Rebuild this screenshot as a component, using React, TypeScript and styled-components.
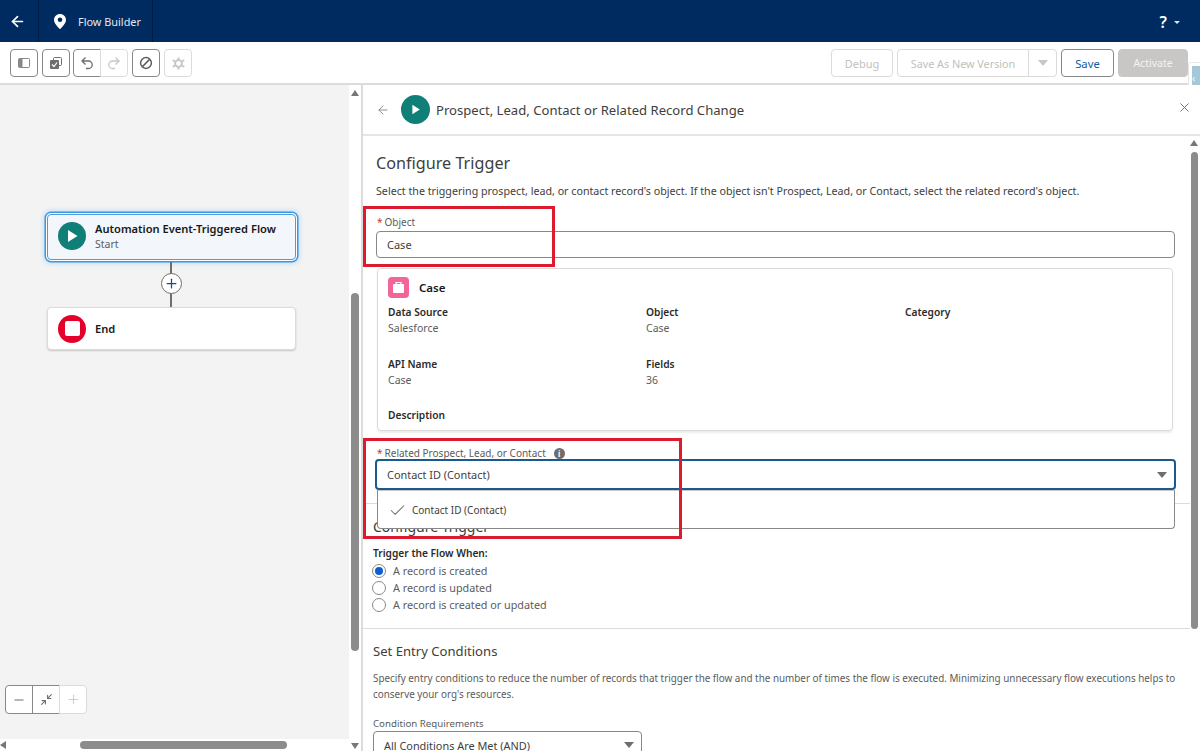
import React from 'react';
import styled, { createGlobalStyle } from 'styled-components';
import { ArrowLeft, Check, Minimize2, Minus, Plus, X } from 'lucide-react';

const GlobalStyle = createGlobalStyle`
  html, body {
    margin: 0;
    padding: 0;
    width: 1200px;
    height: 751px;
    overflow: hidden;
    background: #fff;
    font-family: "Noto Sans", "Open Sans", Arial, sans-serif;
    color: #3e3e3c;
  }
  * { box-sizing: border-box; }
`;

const Page = styled.div`
  position: relative;
  width: 1200px;
  height: 751px;
  overflow: hidden;
  display: flex;
  flex-direction: column;
`;

const Header = styled.header`
  height: 42px;
  flex: none;
  background: #002b60;
  display: flex;
  align-items: stretch;
  color: #fff;
`;

const BackTab = styled.div`
  width: 39px;
  border-right: 1px solid #001c42;
  display: flex;
  align-items: center;
  justify-content: center;
  padding-right: 4px;
`;

const TitleTab = styled.div`
  width: 114px;
  border-right: 1px solid #001c42;
  display: flex;
  align-items: center;
  gap: 12px;
  padding-left: 15px;
  font-size: 10.9px;
  color: #e4e9f0;
`;

const HelpMenu = styled.div`
  margin-left: auto;
  padding: 2px 20px 0 0;
  display: flex;
  align-items: center;
  gap: 7px;
  font-size: 16px;
  font-weight: 600;
`;

const Caret = styled.span<{ $w?: number; $color?: string }>`
  width: 0;
  height: 0;
  border-left: ${(p) => p.$w || 5}px solid transparent;
  border-right: ${(p) => p.$w || 5}px solid transparent;
  border-top: ${(p) => ((p.$w || 5) * 6) / 5}px solid ${(p) => p.$color || '#706e6b'};
`;

const Toolbar = styled.div`
  height: 43px;
  flex: none;
  background: #fff;
  border-bottom: 2px solid #dcdcdc;
  padding: 7px 12px 0 10px;
  display: flex;
  align-items: flex-start;
`;

const ToolGroup = styled.div<{ $gap?: number }>`
  display: flex;
  margin-right: ${(p) => p.$gap ?? 4}px;
`;

const IconButton = styled.div<{ $disabled?: boolean; $join?: 'left' | 'right' }>`
  width: 28px;
  height: 28px;
  background: #fff;
  border: 1px solid ${(p) => (p.$disabled ? '#dddbda' : '#8a8886')};
  border-radius: ${(p) => (p.$join === 'left' ? '4px 0 0 4px' : p.$join === 'right' ? '0 4px 4px 0' : '4px')};
  margin-left: ${(p) => (p.$join === 'right' ? '-1px' : '0')};
  color: ${(p) => (p.$disabled ? '#c9c7c5' : '#706e6b')};
  display: flex;
  align-items: center;
  justify-content: center;
`;

const ToolbarRight = styled.div`
  margin-left: auto;
  display: flex;
  gap: 4px;
`;

const TextButton = styled.div<{ $w: number; $kind?: 'disabled' | 'save' | 'activate' }>`
  width: ${(p) => p.$w}px;
  height: 28px;
  border-radius: 4px;
  font-size: ${(p) => (p.$kind === 'activate' ? 10.5 : p.$kind === 'save' ? 11.3 : 11)}px;
  display: flex;
  align-items: center;
  justify-content: center;
  background: ${(p) => (p.$kind === 'activate' ? '#c9c7c5' : '#fff')};
  border: 1px solid ${(p) => (p.$kind === 'activate' ? '#c9c7c5' : p.$kind === 'save' ? '#8a8886' : '#dddbda')};
  color: ${(p) => (p.$kind === 'activate' ? '#f3f3f3' : p.$kind === 'save' ? '#0b5cab' : '#c0bfbd')};
`;

const SplitButton = styled.div`
  width: 160px;
  height: 28px;
  border: 1px solid #dddbda;
  border-radius: 4px;
  display: flex;
  font-size: 10.8px;
  color: #c0bfbd;
  background: #fff;
`;

const SplitLabel = styled.div`
  flex: 1;
  display: flex;
  align-items: center;
  justify-content: center;
  border-right: 1px solid #dddbda;
`;

const SplitCaret = styled.div`
  width: 27px;
  display: flex;
  align-items: center;
  justify-content: center;
`;

const EdgeTab = styled.div`
  position: absolute;
  left: 1188px;
  top: 62px;
  width: 14px;
  height: 30px;
  background: #fff;
  border: 1px solid #e6e6e6;
  border-radius: 3px;
  padding: 3px 0 3px 3px;
`;

const EdgeTabInner = styled.div`
  height: 100%;
  background: #a4c8d8;
  display: flex;
  align-items: center;
  color: #eef5f8;
  font-size: 11px;
  line-height: 1;
`;

const Main = styled.div`
  flex: 1;
  min-height: 0;
  display: flex;
`;

const Canvas = styled.div`
  position: relative;
  width: 361px;
  flex: none;
  background: #f3f3f3;
`;

const ScrollTrack = styled.div<{ $dir: 'v' | 'h' }>`
  position: absolute;
  background: #fff;
  ${(p) =>
    p.$dir === 'v'
      ? 'right: 0; top: 0; bottom: 0; width: 12px;'
      : 'left: 0; right: 0; bottom: 0; height: 12px;'}
`;

const ScrollThumb = styled.div`
  position: absolute;
  background: #8c8c8c;
  border-radius: 5px;
`;

const ScrollArrow = styled.div<{ $dir: 'up' | 'down' | 'left' }>`
  position: absolute;
  width: 0;
  height: 0;
  ${(p) =>
    p.$dir === 'up'
      ? 'border-left: 4px solid transparent; border-right: 4px solid transparent; border-bottom: 6px solid #777;'
      : p.$dir === 'down'
        ? 'border-left: 4px solid transparent; border-right: 4px solid transparent; border-top: 6px solid #777;'
        : 'border-top: 4px solid transparent; border-bottom: 4px solid transparent; border-right: 6px solid #777;'}
`;

const FlowNode = styled.div<{ $selected?: boolean }>`
  position: absolute;
  left: 47px;
  width: 249px;
  display: flex;
  align-items: center;
  gap: 9px;
  padding-left: 10px;
  border-radius: 4px;
  ${(p) =>
    p.$selected
      ? `top: 129px; height: 46px; padding-bottom: 2px;
         background: #f3f6fa;
         border: 1px solid #4a9de0;
         box-shadow: 0 0 0 1px #fff, 0 0 0 2.5px #3f97e0, 0 0 5px 3px rgba(27,150,255,0.3);`
      : `top: 222px; height: 43px;
         background: #fff;
         border: 1px solid #dddbda;
         box-shadow: 0 1px 2px rgba(0,0,0,0.18);`}
`;

const NodeIcon = styled.div<{ $color: string; $size?: number }>`
  flex: none;
  width: ${(p) => p.$size || 28}px;
  height: ${(p) => p.$size || 28}px;
  border-radius: 50%;
  background: ${(p) => p.$color};
  display: flex;
  align-items: center;
  justify-content: center;
`;

const NodeStop = styled.div`
  width: 15px;
  height: 15px;
  background: #fff;
  border-radius: 2px;
`;

const NodeText = styled.div`
  display: flex;
  flex-direction: column;
  gap: 1px;
`;

const NodeTitle = styled.div`
  font-size: 11.1px;
  font-weight: 600;
  color: #181818;
  line-height: 15px;
`;

const NodeSub = styled.div`
  font-size: 10.5px;
  color: #5c5c5c;
  line-height: 14px;
`;

const Connector = styled.div`
  position: absolute;
  left: 170px;
  top: 177px;
  width: 2px;
  height: 45px;
  background: #706e6b;
`;

const AddCircle = styled.div`
  position: absolute;
  left: 161px;
  top: 188px;
  width: 21px;
  height: 21px;
  border-radius: 50%;
  background: #fff;
  border: 1.5px solid #706e6b;
  color: #0b4f9c;
  display: flex;
  align-items: center;
  justify-content: center;
`;

const ZoomControls = styled.div`
  position: absolute;
  left: 5px;
  top: 600px;
  display: flex;
`;

const ZoomButton = styled.div<{ $disabled?: boolean; $pos: 'first' | 'mid' | 'last' }>`
  width: 28px;
  height: 29px;
  margin-left: ${(p) => (p.$pos === 'first' ? '0' : '-1px')};
  background: #fff;
  border: 1px solid ${(p) => (p.$disabled ? '#dddbda' : '#8a8886')};
  border-radius: ${(p) => (p.$pos === 'first' ? '4px 0 0 4px' : p.$pos === 'last' ? '0 4px 4px 0' : '0')};
  color: ${(p) => (p.$disabled ? '#c9c7c5' : '#706e6b')};
  display: flex;
  align-items: center;
  justify-content: center;
`;

const Panel = styled.div`
  position: relative;
  flex: 1;
  min-width: 0;
  background: #fff;
  border-left: 2px solid #dcdcdc;
  display: flex;
  flex-direction: column;
`;

const PanelHeader = styled.div`
  height: 51px;
  flex: none;
  border-bottom: 2px solid #e5e5e5;
  display: flex;
  align-items: center;
  padding: 0 0 0 13px;
  position: relative;
`;

const PanelIcon = styled(NodeIcon)`
  margin-left: 11px;
`;

const PanelTitle = styled.div`
  font-size: 13.1px;
  color: #3e3e3c;
  margin-left: 6px;
  padding-top: 1px;
`;

const CloseButton = styled.div`
  position: absolute;
  right: 8px;
  top: 15px;
  color: #706e6b;
  display: flex;
`;

const PanelBody = styled.div`
  flex: 1;
  min-height: 0;
  position: relative;
  overflow: hidden;
`;

const Section = styled.section`
  padding: 16px 25px 0 13px;
  height: 367px;
`;

const Heading = styled.h2<{ $size?: number }>`
  margin: 0;
  font-weight: 400;
  font-size: ${(p) => p.$size || 16.2}px;
  line-height: 22px;
  color: #3e3e3c;
`;

const Description = styled.p`
  margin: 9px 0 0;
  font-size: 10.7px;
  line-height: 16px;
  color: #3e3e3c;
`;

const FieldLabel = styled.div<{ $top: number }>`
  margin-top: ${(p) => p.$top}px;
  font-size: 10px;
  line-height: 14px;
  color: #5c5c5c;
  padding-left: 1px;
  display: flex;
  align-items: center;
`;

const Required = styled.span`
  color: #c23934;
  margin-right: 2px;
`;

const InfoDot = styled.span`
  width: 11px;
  height: 11px;
  border-radius: 50%;
  background: #706e6b;
  color: #fff;
  font-size: 8px;
  font-weight: 700;
  line-height: 11px;
  text-align: center;
  margin-left: 8px;
`;

const TextInput = styled.div`
  height: 27px;
  border: 1px solid #8a8886;
  border-radius: 4px;
  margin-top: 2px;
  padding-left: 10px;
  display: flex;
  align-items: center;
  font-size: 11px;
  color: #3e3e3c;
`;

const RecordCard = styled.div`
  margin: 10px 2px 0 1px;
  height: 163px;
  border: 1px solid #dddbda;
  border-radius: 4px;
  box-shadow: 0 2px 2px rgba(0, 0, 0, 0.08);
  padding: 7px 10px 0;
`;

const CardHead = styled.div`
  display: flex;
  align-items: center;
  gap: 10px;
  height: 22px;
  font-size: 11.5px;
  font-weight: 600;
  color: #181818;
`;

const CaseIcon = styled.div`
  width: 21px;
  height: 21px;
  border-radius: 4px;
  background: #f2649a;
  display: flex;
  align-items: center;
  justify-content: center;
`;

const CardGrid = styled.div`
  display: grid;
  grid-template-columns: 258px 259px 1fr;
  grid-auto-rows: 51.5px;
  margin-top: 6px;
`;

const Detail = styled.div`
  font-size: 10.5px;
  line-height: 16px;
  color: #5c5c5c;
`;

const DetailName = styled.div`
  font-size: 10.2px;
  font-weight: 600;
  color: #2b2b2b;
`;

const SelectBox = styled.div`
  margin: -1px -1px 0;
  height: 31px;
  border: 2px solid #1b5a8f;
  border-radius: 4px;
  padding: 0 7px 0 10px;
  display: flex;
  align-items: center;
  justify-content: space-between;
  font-size: 10.9px;
  color: #3e3e3c;
`;

const Dropdown = styled.div`
  position: absolute;
  left: 14px;
  top: 354px;
  width: 798px;
  height: 39px;
  background: #fff;
  border: 1px solid #8a8886;
  border-top-color: #c9c7c5;
  border-radius: 0 0 4px 4px;
  display: flex;
  align-items: center;
  padding: 1px 0 0 10px;
  gap: 5px;
  font-size: 10px;
  color: #3e3e3c;
  z-index: 2;
`;

const SectionAlt = styled.section`
  border-top: 1px solid #dcdcdc;
  margin-right: 10px;
  padding: 12px 0 0 10px;
  height: 125px;
`;

const FlowWhen = styled.div`
  font-size: 10.2px;
  font-weight: 600;
  line-height: 14px;
  color: #2b2b2b;
  margin-top: 8px;
`;

const RadioList = styled.div`
  margin: 2px 0 0 -1px;
  display: flex;
  flex-direction: column;
`;

const RadioRow = styled.div`
  height: 17px;
  display: flex;
  align-items: center;
  gap: 7px;
  font-size: 10.8px;
  color: #5c5c5c;
`;

const RadioDot = styled.span<{ $on?: boolean }>`
  width: 14px;
  height: 14px;
  border-radius: 50%;
  border: 1px solid #8a8886;
  background: #fff;
  display: flex;
  align-items: center;
  justify-content: center;
  &::after {
    content: '';
    display: ${(p) => (p.$on ? 'block' : 'none')};
    width: 8px;
    height: 8px;
    border-radius: 50%;
    background: #0b5cd5;
  }
`;

const ConditionsSection = styled.section`
  border-top: 1px solid #dcdcdc;
  margin-right: 10px;
  padding: 11px 0 0 10px;
`;

const ConditionsText = styled.p`
  margin: 8px 0 0;
  font-size: 9.87px;
  line-height: 16px;
  color: #5c5c5c;
`;

const ConditionLabel = styled.div`
  margin-top: 15px;
  font-size: 9.7px;
  line-height: 14px;
  color: #5c5c5c;
`;

const ConditionSelect = styled.div`
  margin-top: 0;
  width: 269px;
  height: 30px;
  border: 1px solid #8a8886;
  border-radius: 4px;
  padding: 0 7px 2px 10px;
  display: flex;
  align-items: center;
  justify-content: space-between;
  font-size: 10.9px;
  color: #3e3e3c;
`;

const Annotation = styled.div`
  position: absolute;
  border: 3px solid #dc1c2e;
  z-index: 5;
`;

const ObjectAnnotation = styled(Annotation)`
  left: 363px;
  top: 206px;
  width: 192px;
  height: 61px;
`;

const RelatedAnnotation = styled(Annotation)`
  left: 363px;
  top: 438px;
  width: 319px;
  height: 101px;
`;

const PlayGlyph = ({ size = 14 }: { size?: number }) => (
  <svg width={size} height={size} viewBox="0 0 14 14">
    <path d="M3 1 L12.5 7 L3 13 Z" fill="#fff" />
  </svg>
);

const PinGlyph = () => (
  <svg width="12" height="15" viewBox="0 0 12 15">
    <path
      fillRule="evenodd"
      fill="#fff"
      d="M6 0C2.7 0 0 2.6 0 5.8 0 9.6 4.6 13.9 5.5 14.8c.3.3.7.3 1 0C7.4 13.9 12 9.6 12 5.8 12 2.6 9.3 0 6 0zm0 8a2.3 2.3 0 1 1 0-4.6A2.3 2.3 0 0 1 6 8z"
    />
  </svg>
);

const PanelGlyph = () => (
  <svg width="12" height="10" viewBox="0 0 12 10">
    <rect x="0.5" y="0.5" width="11" height="9" rx="1" fill="#fff" stroke="#8a8886" />
    <rect x="0.5" y="0.5" width="4" height="9" rx="1" fill="#8a8886" />
  </svg>
);

const ChecksGlyph = () => (
  <svg width="12" height="12" viewBox="0 0 12 12">
    <rect x="3.5" y="0.5" width="8" height="8" rx="1" fill="none" stroke="#706e6b" />
    <rect x="0" y="3" width="9" height="9" rx="1" fill="#706e6b" />
    <path d="M2 7.5 L4 9.5 L7 5.5" stroke="#fff" strokeWidth="1.2" fill="none" />
  </svg>
);

const FlipSvg = styled.svg<{ $flip?: boolean }>`
  transform: ${(p) => (p.$flip ? 'scaleX(-1)' : 'none')};
`;

const UndoGlyph = ({ flip }: { flip?: boolean }) => (
  <FlipSvg width="14" height="14" viewBox="0 0 14 14" $flip={flip}>
    <path
      d="M5.5 1.5 L2 5 L5.5 8.5 M2 5 H8.5 A3.6 3.6 0 0 1 8.5 12.5 H6"
      fill="none"
      stroke="currentColor"
      strokeWidth="1.3"
    />
  </FlipSvg>
);

const BlockGlyph = () => (
  <svg width="14" height="14" viewBox="0 0 14 14">
    <circle cx="7" cy="7" r="5.4" fill="none" stroke="#5f5e5c" strokeWidth="1.5" />
    <path d="M3.4 10.6 L10.6 3.4" stroke="#5f5e5c" strokeWidth="1.5" />
  </svg>
);

const GearGlyph = () => (
  <svg width="13" height="13" viewBox="0 0 13 13">
    <circle cx="6.5" cy="6.5" r="3.4" fill="none" stroke="#c9c7c5" strokeWidth="2" />
    <path
      d="M6.5 0.5 V3 M6.5 10 V12.5 M0.8 3.2 L3 4.5 M10 8.5 L12.2 9.8 M0.8 9.8 L3 8.5 M10 4.5 L12.2 3.2"
      stroke="#c9c7c5"
      strokeWidth="2"
    />
  </svg>
);

const BriefcaseGlyph = () => (
  <svg width="13" height="13" viewBox="0 0 13 13">
    <path d="M4 3 V1.5 H9 V3" fill="none" stroke="#fff" strokeWidth="1.2" />
    <rect x="1" y="3" width="11" height="9" rx="1" fill="#fff" />
  </svg>
);

const details = [
  { name: 'Data Source', value: 'Salesforce' },
  { name: 'Object', value: 'Case' },
  { name: 'Category', value: '' },
  { name: 'API Name', value: 'Case' },
  { name: 'Fields', value: '36' },
  { name: '', value: '' },
  { name: 'Description', value: '' },
];

const triggers = [
  { label: 'A record is created', on: true },
  { label: 'A record is updated', on: false },
  { label: 'A record is created or updated', on: false },
];

export default function App() {
  return (
    <Page>
      <GlobalStyle />
      <Header>
        <BackTab>
          <ArrowLeft size={17} strokeWidth={2.4} />
        </BackTab>
        <TitleTab>
          <PinGlyph />
          Flow Builder
        </TitleTab>
        <HelpMenu>
          ?
          <Caret $w={3} $color="#dfe5ee" />
        </HelpMenu>
      </Header>

      <Toolbar>
        <ToolGroup>
          <IconButton>
            <PanelGlyph />
          </IconButton>
        </ToolGroup>
        <ToolGroup $gap={3}>
          <IconButton>
            <ChecksGlyph />
          </IconButton>
        </ToolGroup>
        <ToolGroup>
          <IconButton $join="left">
            <UndoGlyph />
          </IconButton>
          <IconButton $join="right" $disabled>
            <UndoGlyph flip />
          </IconButton>
        </ToolGroup>
        <ToolGroup>
          <IconButton>
            <BlockGlyph />
          </IconButton>
        </ToolGroup>
        <ToolGroup $gap={0}>
          <IconButton $disabled>
            <GearGlyph />
          </IconButton>
        </ToolGroup>
        <ToolbarRight>
          <TextButton $w={62} $kind="disabled">
            Debug
          </TextButton>
          <SplitButton>
            <SplitLabel>Save As New Version</SplitLabel>
            <SplitCaret>
              <Caret $w={5} $color="#c9c7c5" />
            </SplitCaret>
          </SplitButton>
          <TextButton $w={53} $kind="save">
            Save
          </TextButton>
          <TextButton $w={70} $kind="activate">
            Activate
          </TextButton>
        </ToolbarRight>
      </Toolbar>
      <EdgeTab>
        <EdgeTabInner>‹</EdgeTabInner>
      </EdgeTab>

      <Main>
        <Canvas>
          <FlowNode $selected>
            <NodeIcon $color="#0f7f78">
              <PlayGlyph />
            </NodeIcon>
            <NodeText>
              <NodeTitle>Automation Event-Triggered Flow</NodeTitle>
              <NodeSub>Start</NodeSub>
            </NodeText>
          </FlowNode>
          <Connector />
          <AddCircle>
            <Plus size={15} strokeWidth={2} />
          </AddCircle>
          <FlowNode>
            <NodeIcon $color="#e4002b">
              <NodeStop />
            </NodeIcon>
            <NodeTitle>End</NodeTitle>
          </FlowNode>
          <ZoomControls>
            <ZoomButton $pos="first">
              <Minus size={14} strokeWidth={2} />
            </ZoomButton>
            <ZoomButton $pos="mid">
              <Minimize2 size={13} strokeWidth={2} />
            </ZoomButton>
            <ZoomButton $pos="last" $disabled>
              <Plus size={15} strokeWidth={1.4} />
            </ZoomButton>
          </ZoomControls>
          <ScrollTrack $dir="h">
            <ScrollArrow $dir="left" style={{ left: 0, top: 2 }} />
            <ScrollThumb style={{ left: 80, top: 2, width: 207, height: 8 }} />
          </ScrollTrack>
          <ScrollTrack $dir="v">
            <ScrollArrow $dir="up" style={{ left: 2, top: 5 }} />
            <ScrollThumb style={{ left: 2, top: 208, width: 8, height: 358 }} />
            <ScrollArrow $dir="down" style={{ left: 2, bottom: 2 }} />
          </ScrollTrack>
        </Canvas>

        <Panel>
          <PanelHeader>
            <ArrowLeft size={14} color="#8a8886" strokeWidth={1.6} />
            <PanelIcon $color="#0f7f78" $size={29}>
              <PlayGlyph size={11} />
            </PanelIcon>
            <PanelTitle>Prospect, Lead, Contact or Related Record Change</PanelTitle>
            <CloseButton>
              <X size={15} strokeWidth={1.5} />
            </CloseButton>
          </PanelHeader>

          <PanelBody>
            <Section>
              <Heading>Configure Trigger</Heading>
              <Description>
                Select the triggering prospect, lead, or contact record's object. If the object isn't Prospect, Lead, or
                Contact, select the related record's object.
              </Description>
              <FieldLabel $top={16}>
                <Required>*</Required>Object
              </FieldLabel>
              <TextInput>Case</TextInput>
              <RecordCard>
                <CardHead>
                  <CaseIcon>
                    <BriefcaseGlyph />
                  </CaseIcon>
                  Case
                </CardHead>
                <CardGrid>
                  {details.map((d, i) => (
                    <Detail key={i}>
                      <DetailName>{d.name}</DetailName>
                      {d.value}
                    </Detail>
                  ))}
                </CardGrid>
              </RecordCard>
              <FieldLabel $top={15}>
                <Required>*</Required>Related Prospect, Lead, or Contact
                <InfoDot>i</InfoDot>
              </FieldLabel>
              <SelectBox>
                Contact ID (Contact)
                <Caret />
              </SelectBox>
            </Section>
            <Dropdown>
              <Check size={19} strokeWidth={1.3} color="#706e6b" />
              Contact ID (Contact)
            </Dropdown>

            <SectionAlt>
              <Heading $size={14}>Configure Trigger</Heading>
              <FlowWhen>Trigger the Flow When:</FlowWhen>
              <RadioList>
                {triggers.map((t) => (
                  <RadioRow key={t.label}>
                    <RadioDot $on={t.on} />
                    {t.label}
                  </RadioRow>
                ))}
              </RadioList>
            </SectionAlt>

            <ConditionsSection>
              <Heading $size={13.1}>Set Entry Conditions</Heading>
              <ConditionsText>
                Specify entry conditions to reduce the number of records that trigger the flow and the number of times
                the flow is executed. Minimizing unnecessary flow executions helps to conserve your org's resources.
              </ConditionsText>
              <ConditionLabel>Condition Requirements</ConditionLabel>
              <ConditionSelect>
                All Conditions Are Met (AND)
                <Caret />
              </ConditionSelect>
            </ConditionsSection>

            <ScrollArrow $dir="up" style={{ right: 2, top: 4 }} />
            <ScrollThumb style={{ right: 2, top: 16, width: 7, height: 477 }} />
          </PanelBody>
        </Panel>
      </Main>

      <ObjectAnnotation />
      <RelatedAnnotation />
    </Page>
  );
}
